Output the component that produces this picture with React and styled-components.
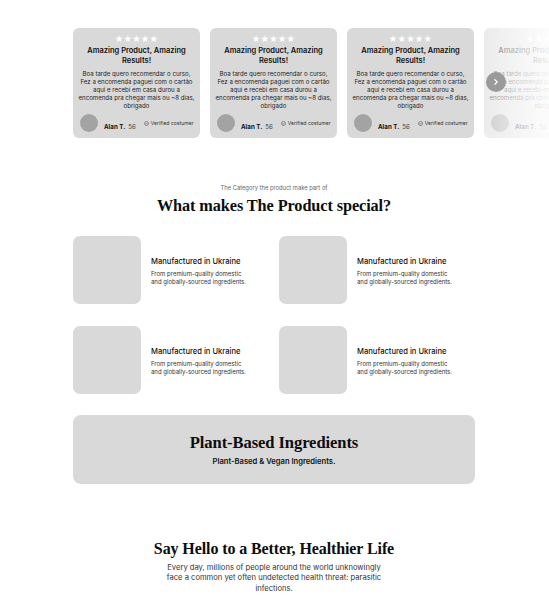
import React from "react";
import styled, { createGlobalStyle } from "styled-components";

const GlobalStyle = createGlobalStyle`
  html, body {
    margin: 0;
    padding: 0;
    background: #ffffff;
    overflow-x: hidden;
  }
  body {
    font-family: Inter, "Liberation Sans", Arial, sans-serif;
    color: #111;
  }
`;

const Page = styled.div`
  width: 549px;
  box-sizing: border-box;
  overflow: hidden;
  padding: 28px 0 20px 73px;
`;

const Carousel = styled.div`
  position: relative;
  width: 402px;
`;

const Track = styled.div`
  display: flex;
  gap: 10px;
`;

const Card = styled.div`
  flex-shrink: 0;
  width: 127px;
  height: 110px;
  box-sizing: border-box;
  background: #d9d9d9;
  border-radius: 6px;
  padding: 6px 4px 0;
  display: flex;
  flex-direction: column;
  align-items: center;
  text-align: center;
`;

const Stars = styled.div`
  color: #fff;
  font-size: 9.5px;
  letter-spacing: 0.2px;
  line-height: 10px;
  font-family: "DejaVu Sans", sans-serif;
`;

const CardTitle = styled.div`
  font-weight: 600;
  font-size: 7.5px;
  line-height: 10px;
  margin-top: 2px;
  color: #111;
`;

const CardBody = styled.div`
  font-size: 6.1px;
  line-height: 8px;
  color: #222;
  margin-top: 4px;
`;

const CardFooter = styled.div`
  align-self: stretch;
  display: flex;
  align-items: center;
  margin-top: auto;
  padding: 0 0 5px 3px;
  gap: 6px;
`;

const Avatar = styled.div`
  width: 18px;
  height: 18px;
  border-radius: 50%;
  background: #a3a3a3;
`;

const Name = styled.span`
  font-size: 6.2px;
  font-weight: 700;
  color: #111;
`;

const Count = styled.span`
  font-size: 6.2px;
  color: #444;
  margin-left: 3px;
`;

const Verified = styled.span`
  display: flex;
  align-items: center;
  gap: 2px;
  font-size: 5.1px;
  color: #333;
  margin-left: 2px;
`;

const Fade = styled.div`
  position: absolute;
  top: 0;
  left: 407px;
  width: 80px;
  height: 110px;
  background: linear-gradient(
    to right,
    rgba(255, 255, 255, 0.45),
    rgba(255, 255, 255, 0.75) 50%,
    #fff 100%
  );
`;

const Arrow = styled.div`
  position: absolute;
  left: 413px;
  top: 44px;
  width: 20px;
  height: 20px;
  border-radius: 50%;
  background: #9a9a9a;
  display: flex;
  align-items: center;
  justify-content: center;
`;

const Section = styled.div`
  width: 402px;
  margin-top: 46px;
  display: flex;
  flex-direction: column;
  align-items: center;
`;

const Eyebrow = styled.div`
  font-size: 5.8px;
  color: #666;
  line-height: 8px;
`;

const Heading = styled.h2`
  margin: ${(p) => p.$mt || 0}px 0 0;
  font-family: "Liberation Serif", "Times New Roman", serif;
  font-weight: 700;
  font-size: ${(p) => p.$size || 16.3}px;
  line-height: 1.2;
  color: #0d0d0d;
  letter-spacing: -0.1px;
`;

const Grid = styled.div`
  align-self: stretch;
  margin-top: 20px;
  display: grid;
  grid-template-columns: 1fr 1fr;
  column-gap: 10px;
  row-gap: 22px;
`;

const Feature = styled.div`
  display: flex;
  align-items: center;
  gap: 10px;
`;

const Thumb = styled.div`
  width: 68px;
  height: 68px;
  border-radius: 7px;
  background: #d9d9d9;
  flex-shrink: 0;
`;

const FeatureCopy = styled.div`
  padding-top: 3px;
`;

const FeatureTitle = styled.div`
  font-size: 7.6px;
  font-weight: 500;
  color: #111;
  line-height: 10px;
`;

const FeatureText = styled.div`
  font-size: 6px;
  line-height: 8px;
  color: #333;
  margin-top: 3px;
`;

const Banner = styled.div`
  align-self: stretch;
  margin-top: 21px;
  height: 69px;
  border-radius: 8px;
  background: #d9d9d9;
  display: flex;
  flex-direction: column;
  align-items: center;
  justify-content: center;
`;

const BannerSub = styled.div`
  font-size: 7.6px;
  font-weight: 600;
  color: #111;
  margin-top: 4px;
`;

const Intro = styled.p`
  margin: 5px 0 0;
  width: 230px;
  font-size: 7.6px;
  line-height: 10.5px;
  color: #333;
  text-align: center;
`;

const reviews = [1, 2, 3, 4];
const features = [1, 2, 3, 4];

const Review = () => (
  <Card>
    <Stars>★★★★★</Stars>
    <CardTitle>
      Amazing Product, Amazing
      <br />
      Results!
    </CardTitle>
    <CardBody>
      Boa tarde quero recomendar o curso,
      <br />
      Fez a encomenda paguei com o cartão
      <br />
      aqui e recebi em casa durou a
      <br />
      encomenda pra chegar mais ou ~8 dias,
      <br />
      obrigado
    </CardBody>
    <CardFooter>
      <Avatar />
      <span>
        <Name>Alan T.</Name>
        <Count>56</Count>
      </span>
      <Verified>
        <svg width="5" height="5" viewBox="0 0 10 10">
          <circle cx="5" cy="5" r="4" fill="none" stroke="#555" strokeWidth="1.2" />
          <path d="M3 5.2l1.4 1.3L7 3.8" fill="none" stroke="#555" strokeWidth="1.2" />
        </svg>
        Verified costumer
      </Verified>
    </CardFooter>
  </Card>
);

const App = () => (
  <Page>
    <GlobalStyle />
    <Carousel>
      <Track>
        {reviews.map((r) => (
          <Review key={r} />
        ))}
      </Track>
      <Fade />
      <Arrow>
        <svg width="8" height="8" viewBox="0 0 10 10">
          <path d="M3.5 2l3 3-3 3" fill="none" stroke="#fff" strokeWidth="1.6" strokeLinecap="round" strokeLinejoin="round" />
        </svg>
      </Arrow>
    </Carousel>

    <Section>
      <Eyebrow>The Category the product make part of</Eyebrow>
      <Heading $mt={4}>What makes The Product special?</Heading>
      <Grid>
        {features.map((f) => (
          <Feature key={f}>
            <Thumb />
            <FeatureCopy>
              <FeatureTitle>Manufactured in Ukraine</FeatureTitle>
              <FeatureText>
                From premium-quality domestic
                <br />
                and globally-sourced ingredients.
              </FeatureText>
            </FeatureCopy>
          </Feature>
        ))}
      </Grid>
      <Banner>
        <Heading $size={16.6}>Plant-Based Ingredients</Heading>
        <BannerSub>Plant-Based &amp; Vegan Ingredients.</BannerSub>
      </Banner>
      <Heading $size={16} $mt={55}>
        Say Hello to a Better, Healthier Life
      </Heading>
      <Intro>
        Every day, millions of people around the world unknowingly face a
        common yet often undetected health threat: parasitic infections.
      </Intro>
    </Section>
  </Page>
);

export default App;
